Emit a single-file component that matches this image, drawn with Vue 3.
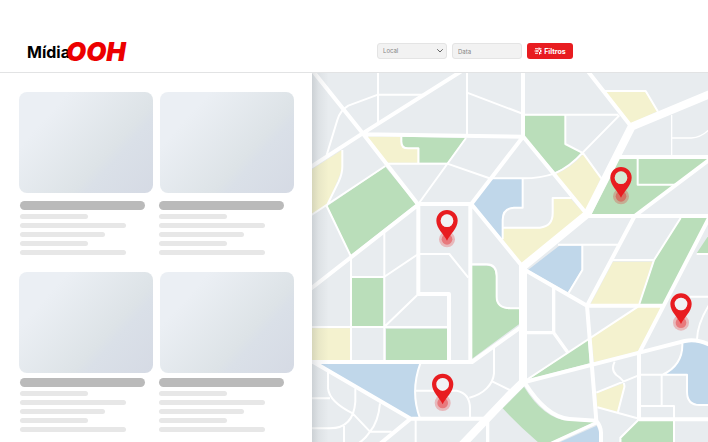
<script setup>
import { ref } from 'vue'

const local = ref('')
const date = ref('')

const rows = [
  { id: 'top', tight: false },
  { id: 'bottom', tight: true }
]

const areas = [
  { kind: 'sand', d: 'M6 298 96 240V300L50 408 6 434Z' },
  { kind: 'park', d: 'M52 408 226 290 318 402 122 555Z' },
  { kind: 'sand', d: 'M168 200H274V215Q274 235 294 235H325V278H230Z' },
  { kind: 'park', d: 'M276 200 466 204 412 278H328V234H295Q276 232 276 215Z' },
  { kind: 'water', d: 'M488 402 545 327H637V411H612Q578 415 578 450V508Z' },
  { kind: 'sand', d: 'M580 475H690Q730 470 730 430V386H782L826 434 636 584 578 508Z' },
  { kind: 'park', d: 'M644 136H765V222L814 248Q780 290 735 306L644 200Z' },
  { kind: 'sand', d: 'M820 252 872 325 828 422 737 312Q780 296 820 252Z' },
  { kind: 'sand', d: 'M884 66H1006L1042 124 960 162Z' },
  { kind: 'park', d: 'M926 267H1194L975 434H844Z' },
  { kind: 'park', d: 'M1112 444H1196L1062 702H988L1034 570Z' },
  { kind: 'park', d: 'M1196 496 1160 550H1196Z' },
  { kind: 'sand', d: 'M909 575H1027L986 702H842Z' },
  { kind: 'sand', d: 'M984 711H1056L984 844 852 877 844 800Z' },
  { kind: 'park', d: 'M834 807 839 880 659 927Z' },
  { kind: 'sand', d: 'M859 970 942 940 944 955 922 1025 862 1012Z' },
  { kind: 'water', d: 'M654 600 748 527H815V600L774 667Z' },
  { kind: 'water', d: 'M1117 820Q1160 808 1200 828V1003H1169Q1129 1000 1129 965V913H1064Q1119 885 1117 820Z' },
  { kind: 'park', d: 'M642 950Q700 1045 774 1052L856 1055 716 1120H688Q630 1070 578 1015Z' },
  { kind: 'water', d: 'M742 1120 860 1067 868 1085V1120Z' },
  { kind: 'park', d: 'M984 1053H1089V1120H934V1105Z' },
  { kind: 'park', d: 'M126 624H220V769H126Z' },
  { kind: 'park', d: 'M228 776H411V871H228Z' },
  { kind: 'sand', d: 'M6 775H120V870H6Z' },
  { kind: 'water', d: 'M28 882H330Q300 965 328 1042H302Z' },
  { kind: 'park', d: 'M486 587H530Q558 587 558 622V682Q560 717 600 717H628V762L486 866Z' }
]

const roads = [
  {
    size: 'hairline',
    d: 'M1085 135V258M1085 204H1144Q1176 202 1200 176'
  },
  {
    size: 'lane',
    d: `M204 9V160M50 255 82 150Q90 122 115 107L204 74H345M471 9V195M471 68 640 132
      M97 240V290Q97 310 86 335L50 408 122 558M0 438 226 288M225 281H412M468 204 325 402M412 281 545 327
      M274 200V215Q274 235 294 235H325V280M578 508V450Q578 415 612 413H638V325
      M580 473H690Q728 469 728 430V384H785M640 134H925M766 136V222L816 248M928 136 818 248Q780 290 735 310 690 325 640 325H545
      M818 248 874 325M880 63H1007L1044 125M983 267V344H1095M1112 444 1032 570 988 702M909 570H1032
      M1160 552H1200M744 524H924M817 524V600L776 668M649 930 984 710M859 968 984 917
      M914 875Q902 900 919 915 946 932 943 952L924 1025M862 1012 982 1045
      M987 914H1131V965Q1131 1005 1169 1005H1200M1055 914V1005M987 1008H1092V1120M1117 820Q1119 885 1058 914
      M931 1120V1103L984 1051M1139 680H1200M1200 700Q1162 760 1161 808M594 715H630
      M223 488V876M325 552H418L475 623M222 621 325 552M123 555V876M123 621H222M6 771H412M225 769 322 675
      M486 583H530Q560 583 560 618V680Q560 714 600 714M552 825V910Q550 935 530 955 510 975 478 983M548 935 604 962
      M331 880Q300 965 330 1045M318 962H440Q480 970 480 1015V1045M317 1050V1120
      M54 905V955Q58 995 128 1030L180 1085H245M6 985H60M136 955V995Q130 1075 60 1075H6M102 1063V1120M210 1000Q205 1055 180 1085 165 1108 145 1120`
  },
  { size: 'street', d: 'M731 650V788M645 788H731L774 848M533 1050V1120M859 1058 720 1122' },
  {
    size: 'avenue',
    d: `M6 0 158 190 325 404M0 292 158 190 460 0M158 193 640 200M639 9V200L484 402M640 200 832 434
      M325 402H484L639 592M325 402V672H417V876M325 404 0 658M481 402V876M0 876H486L640 766
      M833 3 960 165M925 261H1200M830 438H1200M1200 268 974 438 831 707M645 600 831 707H1062
      M831 707 859 1052Q873 1070 873 1088V1120M644 936 988 848 1124 813Q1160 805 1200 825M987 848V1048H1200
      M1200 438 988 848M644 938Q710 1043 779 1047L859 1052M10 876 302 1046H532M302 1046 212 1120`
  },
  { size: 'highway', d: 'M1210 68 965 170 832 432 639 590V936L594 980 455 1126' }
]

const pins = [
  { name: 'centro', x: 411, y: 452 },
  { name: 'parque', x: 933, y: 323 },
  { name: 'sul', x: 398, y: 943 },
  { name: 'leste', x: 1113, y: 702 }
]
</script>

<template>
  <div class="page">
    <header class="topbar">
      <a class="logo" href="#"><span class="logo-name">Mídia</span><span class="logo-mark">OOH</span></a>
      <form class="filters" @submit.prevent>
        <label class="field">
          <select v-model="local" class="control" aria-label="Local">
            <option value="">Local</option>
          </select>
          <svg class="chevron" viewBox="0 0 8 6" aria-hidden="true">
            <path d="M1.5 1.5 4 4 6.5 1.5" />
          </svg>
        </label>
        <label class="field">
          <input v-model="date" class="control" type="text" placeholder="Data" aria-label="Data" />
        </label>
        <button class="submit" type="submit">
          <svg class="sliders" viewBox="0 0 16 16" aria-hidden="true">
            <path d="M2 3.5H9M10 1V6M10 3.5H15M1 8H10M6 6V10M13 5.5V10.5M13 8H16M2 12.5H8M11 10V15M11 12.5H15" />
          </svg>
          <span>Filtros</span>
        </button>
      </form>
    </header>

    <main class="content">
      <section class="results">
        <div v-for="row in rows" :key="row.id" class="row" :class="{ tight: row.tight }">
          <div class="thumbs">
            <div v-for="n in 2" :key="n" class="thumb"></div>
          </div>
          <div class="details">
            <div v-for="n in 2" :key="n" class="detail">
              <div class="title"></div>
              <div class="line short"></div>
              <div class="line long"></div>
              <div class="line medium"></div>
              <div class="line short"></div>
              <div class="line long"></div>
            </div>
          </div>
        </div>
      </section>

      <section class="map">
        <svg class="map-canvas" viewBox="6 9 1188 1107" preserveAspectRatio="xMinYMin slice" aria-hidden="true">
          <defs>
            <linearGradient id="edge">
              <stop offset="0" stop-color="#39424a" stop-opacity="0.16" />
              <stop offset="0.4" stop-color="#39424a" stop-opacity="0.06" />
              <stop offset="1" stop-color="#39424a" stop-opacity="0" />
            </linearGradient>
          </defs>
          <path v-for="(area, i) in areas" :key="'a' + i" :class="area.kind" :d="area.d" />
          <path v-for="road in roads" :key="road.size" class="road" :class="road.size" :d="road.d" />
          <rect x="6" y="9" width="50" height="1107" fill="url(#edge)" />
          <g v-for="pin in pins" :key="pin.name" class="pin" :transform="`translate(${pin.x} ${pin.y})`">
            <circle class="halo" cy="56" r="24" />
            <circle class="halo core" cy="56" r="16" />
            <path
              fill-rule="evenodd"
              d="M0 60C-9 40-32 23-32 0A32 32 0 0 1 32 0C32 23 9 40 0 60ZM0-19A19 19 0 1 0 0 19A19 19 0 1 0 0-19Z"
            />
            <circle class="eye" r="19" />
          </g>
        </svg>
      </section>
    </main>
  </div>
</template>

<style>
body {
  background: #fff;
}
</style>

<style scoped>
.page {
  display: flex;
  flex-direction: column;
  min-height: 100vh;
  font-family: Inter, 'Liberation Sans', sans-serif;
}

.page * {
  box-sizing: border-box;
}

.topbar {
  display: grid;
  grid-template-columns: 350fr 331fr;
  align-items: center;
  padding: 30px 0 0 27px;
  height: 73px;
  border-bottom: 1px solid #e2e3e4;
}

.logo {
  display: flex;
  align-items: center;
  padding-top: 2px;
  line-height: 24px;
  text-decoration: none;
}

.logo-name {
  color: #000;
  font-size: 16px;
  font-weight: 700;
}

.logo-mark {
  margin-left: -4px;
  color: #ec0000;
  font-size: 26px;
  font-weight: 900;
  font-style: italic;
}

.filters {
  display: flex;
  gap: 5px;
}

.field {
  position: relative;
  display: flex;
  width: 70px;
}

.control {
  width: 100%;
  height: 16px;
  margin: 0;
  padding: 0 5px;
  border: 1px solid #e4e4e4;
  border-radius: 3px;
  background: #f2f2f2;
  color: #858585;
  font-family: inherit;
  font-size: 6px;
  line-height: 14px;
  appearance: none;
}

.control::placeholder {
  color: #858585;
  opacity: 1;
}

.chevron {
  position: absolute;
  top: 5px;
  right: 3px;
  width: 8px;
  height: 6px;
  fill: none;
  stroke: #666;
  stroke-linecap: round;
  pointer-events: none;
}

.submit {
  display: flex;
  align-items: center;
  justify-content: center;
  gap: 2px;
  width: 46px;
  height: 16px;
  padding: 0;
  border: 0;
  border-radius: 3px;
  background: #e81c20;
  color: #fff;
  font-family: inherit;
  font-size: 7px;
  font-weight: 700;
}

.sliders {
  width: 8px;
  height: 8px;
  fill: none;
  stroke: #fff;
  stroke-width: 2;
}

.content {
  display: grid;
  flex: 1;
  grid-template-columns: 312fr 396fr;
}

.results {
  display: flex;
  flex-direction: column;
  gap: 17px;
  padding: 19px 18px 0 19px;
}

.row {
  display: flex;
  flex-direction: column;
  gap: 8px;
}

.row.tight {
  gap: 5px;
}

.thumbs {
  display: grid;
  grid-template-columns: 1fr 1fr;
  gap: 7px;
}

.thumb {
  aspect-ratio: 134 / 101;
  border-radius: 8px;
  background: linear-gradient(132deg, #ebeff4 22%, #dde3e7 64%, #dae0e8 70%, #d5dae4 100%);
}

.details {
  display: grid;
  grid-template-columns: 1fr 1fr;
  gap: 14px;
  padding: 0 10px 0 1px;
}

.detail {
  display: flex;
  flex-direction: column;
  gap: 4px;
}

.title {
  height: 9px;
  border-radius: 5px;
  background: #bababa;
}

.line {
  height: 5px;
  border-radius: 3px;
  background: #e7e7e7;
}

.short {
  width: 54%;
}

.medium {
  width: 68%;
}

.long {
  width: 85%;
}

.map {
  overflow: hidden;
  background: #e8ecef;
}

.map-canvas {
  display: block;
  width: 100%;
  height: 100%;
}

.park {
  fill: #badeba;
}

.sand {
  fill: #f4f2cf;
}

.water {
  fill: #c0d7ea;
}

.road {
  fill: none;
  stroke: #fff;
  stroke-linejoin: round;
}

.hairline {
  stroke-width: 4;
}

.lane {
  stroke-width: 6;
}

.street {
  stroke-width: 10;
}

.avenue {
  stroke-width: 12;
}

.highway {
  stroke-width: 24;
}

.pin {
  fill: #e81c20;
}

.halo {
  opacity: 0.25;
}

.core {
  opacity: 0.4;
}

.eye {
  fill: #fff;
  opacity: 0.4;
}
</style>
